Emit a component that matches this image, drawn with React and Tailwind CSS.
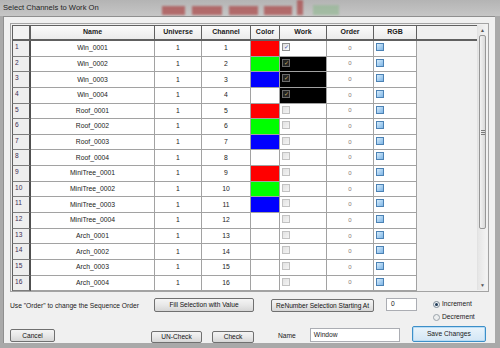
import React from 'react';

const names = [
  'Win_0001', 'Win_0002', 'Win_0003', 'Win_0004',
  'Roof_0001', 'Roof_0002', 'Roof_0003', 'Roof_0004',
  'MiniTree_0001', 'MiniTree_0002', 'MiniTree_0003', 'MiniTree_0004',
  'Arch_0001', 'Arch_0002', 'Arch_0003', 'Arch_0004',
];

const swatch = ['bg-[#ff0000]', 'bg-[#00ff00]', 'bg-[#0000ff]', 'bg-white'];

const font = { fontFamily: '"Liberation Sans", Arial, sans-serif' };

const Btn = ({ children, className = '' }) => (
  <div
    className={`flex items-center justify-center rounded-[2px] border border-[#707070] bg-gradient-to-b from-[#f4f4f4] via-[#e8e8e8] to-[#d6d6d6] text-[6.6px] text-[#111] ${className}`}
  >
    {children}
  </div>
);

const WorkBox = ({ state }) => {
  if (state === 'on') {
    return (
      <div className="ml-[2px] mt-[2px] flex h-[8px] w-[8px] items-center justify-center border border-[#8e8f8f] bg-gradient-to-br from-[#dcdcdc] to-white text-[6px] leading-none text-[#3c4fb0]">
        ✓
      </div>
    );
  }
  if (state === 'dark') {
    return (
      <div className="ml-[2px] mt-[2px] flex h-[8px] w-[8px] items-center justify-center border border-[#6a6a6a] bg-[#232323] text-[6px] leading-none text-[#c9b46a]">
        ✓
      </div>
    );
  }
  return <div className="ml-[2px] mt-[2px] h-[8px] w-[8px] border border-[#c2c2c2] bg-gradient-to-br from-[#e2e2e2] to-[#f4f4f4]" />;
};

const RgbBox = () => (
  <div className="ml-[2px] mt-[2px] h-[8px] w-[8px] border border-[#4c82b4] bg-gradient-to-br from-[#d6ecfb] to-[#7fb6e6]" />
);

export default function App() {
  return (
    <div className="flex h-[348px] w-[500px] flex-col overflow-hidden bg-[#a9a9a9]" style={font}>
      {/* Title bar */}
      <div className="relative h-[16px] shrink-0 overflow-hidden bg-gradient-to-b from-[#b4b4b4] to-[#c6c6c6]">
        <div className="absolute left-[162px] top-[6px] h-[9px] w-[23px] bg-[#a83232] opacity-60 blur-[1px]" />
        <div className="absolute left-[192px] top-[6px] h-[9px] w-[30px] bg-[#a83232] opacity-60 blur-[1px]" />
        <div className="absolute left-[229px] top-[6px] h-[9px] w-[29px] bg-[#a83232] opacity-60 blur-[1px]" />
        <div className="absolute left-[264px] top-[6px] h-[9px] w-[28px] bg-[#a83232] opacity-60 blur-[1px]" />
        <div className="absolute left-[297px] top-0 h-[15px] w-[6px] bg-[#a83232] opacity-60 blur-[1px]" />
        <div className="absolute left-[313px] top-[5px] h-[10px] w-[26px] bg-[#8fb88f] opacity-60 blur-[1px]" />
        <div className="absolute left-[3px] top-[2px] text-[7.6px] text-[#1e1e1e]">Select Channels to Work On</div>
      </div>

      {/* Client area */}
      <div className="ml-[3px] mr-[5px] flex flex-1 flex-col border-l border-t border-[#8f8f8f] bg-[#f0f0f0] pl-[6px] pt-[6px]">
        {/* Grid */}
        <div className="flex h-[269px] w-[479px] border border-[#a3a3a3] bg-[#f0f0f0] p-px">
          <div className="flex flex-1 flex-col">
            {/* header */}
            <div className="flex h-[16px] shrink-0 border-b-2 border-t border-[#606060] text-[7px] font-bold text-[#1a1a1a]">
              <div className="w-[19px] border-l border-r-2 border-[#606060] bg-[#f2f2f2]" />
              {[
                ['Name', 'w-[124px]'],
                ['Universe', 'w-[47px]'],
                ['Channel', 'w-[49px]'],
                ['Color', 'w-[29px]'],
                ['Work', 'w-[47px]'],
                ['Order', 'w-[47px]'],
                ['RGB', 'w-[43px]'],
              ].map(([t, w]) => (
                <div
                  key={t}
                  className={`${w} flex items-center justify-center border-r border-[#606060] bg-gradient-to-b from-[#fbfbfb] to-[#ebebeb]`}
                >
                  {t}
                </div>
              ))}
            </div>
            {/* rows */}
            {names.map((n, i) => {
              const work = i === 0 ? 'on' : i < 4 ? 'dark' : 'off';
              return (
                <div key={n} className="flex h-[15.65px] shrink-0 text-[6.8px] text-[#222]">
                  <div className="w-[19px] border-b border-l border-r-2 border-b-[#7d7d7d] border-l-[#606060] border-r-[#505050] bg-[#eeeeee] pl-[2px] pt-[1px] text-[6.6px] text-[#3d2c52]">
                    {i + 1}
                  </div>
                  <div className="flex w-[124px] items-center justify-center border-b border-r border-[#a2a2a2] bg-white">{n}</div>
                  <div className="flex w-[47px] items-center justify-center border-b border-r border-[#a2a2a2] bg-white">1</div>
                  <div className="flex w-[49px] items-center justify-center border-b border-r border-[#a2a2a2] bg-white">{i + 1}</div>
                  <div className={`w-[29px] border-b border-r border-[#a2a2a2] ${i < 12 ? swatch[i % 4] : 'bg-white'}`} />
                  <div className={`w-[47px] border-b border-r border-[#a2a2a2] ${work === 'dark' ? 'bg-black' : 'bg-white'}`}>
                    <WorkBox state={work} />
                  </div>
                  <div className="flex w-[47px] items-center justify-center border-b border-r border-[#a2a2a2] bg-white text-[6px] text-[#857a72]">0</div>
                  <div className="w-[43px] border-b border-r border-[#a2a2a2] bg-white">
                    <RgbBox />
                  </div>
                </div>
              );
            })}
          </div>
          {/* scrollbar */}
          <div className="flex w-[10px] flex-col border-l border-[#e2e2e2] bg-gradient-to-r from-[#e6e6e6] to-[#f3f3f3]">
            <div className="flex h-[10px] items-center justify-center text-[5px] leading-none text-[#555]">▲</div>
            <div className="mx-px flex h-[194px] items-center justify-center rounded-[2px] border border-[#979797] bg-gradient-to-r from-[#f3f3f3] to-[#d9d9d9]">
              <div className="flex flex-col gap-px">
                <div className="h-px w-[4px] bg-[#7a7a7a]" />
                <div className="h-px w-[4px] bg-[#7a7a7a]" />
                <div className="h-px w-[4px] bg-[#7a7a7a]" />
              </div>
            </div>
            <div className="flex-1" />
            <div className="flex h-[10px] items-center justify-center text-[5px] leading-none text-[#555]">▼</div>
          </div>
        </div>

        {/* Controls row 1 */}
        <div className="mt-[6px] flex items-start text-[6.7px] text-[#1a1a1a]">
          <div className="mt-[3px] w-[144px]">Use "Order" to change the Sequence Order</div>
          <Btn className="h-[14px] w-[100px]">Fill Selection with Value</Btn>
          <Btn className="ml-[17px] mt-px h-[13px] w-[103px]">ReNumber Selection Starting At</Btn>
          <div className="ml-[12px] flex h-[13px] w-[31px] items-center border border-[#abadb3] bg-white pl-[4px]">0</div>
          <div className="ml-[16px] flex flex-col gap-[3px] pt-[1px]">
            <div className="flex items-center gap-[2px]">
              <div className="flex h-[7px] w-[7px] items-center justify-center rounded-full border border-[#7b8894] bg-[#eef2f5]">
                <div className="h-[3px] w-[3px] rounded-full bg-[#1f3a57]" />
              </div>
              <span>Increment</span>
            </div>
            <div className="flex items-center gap-[2px]">
              <div className="h-[7px] w-[7px] rounded-full border border-[#9aa2a9] bg-[#eceeef]" />
              <span>Decrement</span>
            </div>
          </div>
        </div>

        {/* Controls row 2 */}
        <div className="mt-[4px] flex items-start text-[6.7px] text-[#1a1a1a]">
          <Btn className="mt-[3px] h-[13px] w-[45px]">Cancel</Btn>
          <Btn className="ml-[96px] mt-[5px] h-[12px] w-[51px]">UN-Check</Btn>
          <Btn className="ml-[10px] mt-[5px] h-[12px] w-[42px]">Check</Btn>
          <div className="ml-[24px] mt-[5px]">Name</div>
          <div className="ml-[14px] mt-[2px] flex h-[14px] w-[90px] items-center border border-[#abadb3] bg-white pl-[3px]">Window</div>
          <div className="ml-[12px] flex h-[16px] w-[74px] items-center justify-center rounded-[2px] border border-[#3d8fc8] bg-gradient-to-b from-[#eaf4fb] to-[#d3e6f5] shadow-[inset_0_0_0_1px_#b8dcf5]">
            Save Changes
          </div>
        </div>
      </div>
      <div className="h-[5px] shrink-0" />
    </div>
  );
}
